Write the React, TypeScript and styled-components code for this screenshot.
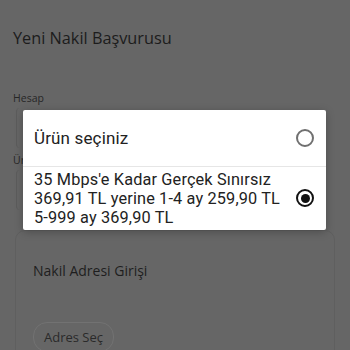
import React from "react";
import styled, { createGlobalStyle } from "styled-components";

const Global = createGlobalStyle`
  html, body { margin: 0; padding: 0; background: #666666; }
  * { box-sizing: border-box; }
`;

const Page = styled.div`
  position: relative;
  width: 350px;
  height: 350px;
  overflow: hidden;
  background: #666666;
  font-family: "Open Sans", sans-serif;
  color: #1e1e1e;
  padding: 0 15px 0 13px;
`;

const Title = styled.h1`
  margin: 0;
  padding-top: 27px;
  font-size: 16.3px;
  font-weight: 400;
  line-height: 22px;
  color: #1c1c1c;
`;

const Label = styled.div<{ $top: number }>`
  margin-top: ${(p) => p.$top}px;
  font-size: 10.5px;
  line-height: 14px;
  color: #262626;
`;

const Field = styled.div`
  margin-top: 3px;
  margin-left: 3px;
  height: 40px;
  border-left: 1px solid #5c5c5c;
  border-radius: 4px;
`;

const Card = styled.div`
  margin-top: 20px;
  margin-left: 2px;
  height: 160px;
  border: 1px solid #5f5f5f;
  border-radius: 10px;
  padding: 30px 17px;
  display: flex;
  flex-direction: column;
  align-items: flex-start;
`;

const CardTitle = styled.div`
  font-size: 14px;
  line-height: 20px;
  color: #1e1e1e;
`;

const OutlineButton = styled.div`
  margin-top: 41px;
  padding: 5px 10px;
  border: 1px solid #727272;
  border-radius: 14px;
  font-size: 13px;
  line-height: 18px;
  color: #2a2a2a;
`;

const Dialog = styled.div`
  position: absolute;
  left: 23px;
  top: 110px;
  width: 303px;
  height: 120px;
  background: #ffffff;
  border-radius: 2px;
  box-shadow: 0 2px 8px rgba(0, 0, 0, 0.25);
  font-family: Roboto, "Noto Sans", sans-serif;
  color: #222222;
  display: flex;
  flex-direction: column;
`;

const Row = styled.div<{ $height: number; $divider?: boolean }>`
  height: ${(p) => p.$height}px;
  display: flex;
  align-items: center;
  padding: 0 12px 0 11px;
  border-bottom: ${(p) => (p.$divider ? "1px solid #e6e6e6" : "none")};
`;

const RowText = styled.div<{ $size: number }>`
  flex: 1;
  font-size: ${(p) => p.$size}px;
  line-height: 19px;
  letter-spacing: 0.15px;
`;

const Radio = styled.div<{ $checked?: boolean }>`
  width: 18px;
  height: 18px;
  border-radius: 50%;
  border: 2px solid ${(p) => (p.$checked ? "#111111" : "#707070")};
  display: flex;
  align-items: center;
  justify-content: center;
  flex-shrink: 0;
  &::after {
    content: "";
    display: ${(p) => (p.$checked ? "block" : "none")};
    width: 9px;
    height: 9px;
    border-radius: 50%;
    background: #111111;
  }
`;

export default function App() {
  return (
    <>
      <Global />
      <Page>
        <Title>Yeni Nakil Başvurusu</Title>
        <Label $top={42}>Hesap</Label>
        <Field />
        <Label $top={5}>Ürün</Label>
        <Field />
        <Card>
          <CardTitle>Nakil Adresi Girişi</CardTitle>
          <OutlineButton>Adres Seç</OutlineButton>
        </Card>
        <Dialog>
          <Row $height={57} $divider>
            <RowText $size={17}>Ürün seçiniz</RowText>
            <Radio />
          </Row>
          <Row $height={62}>
            <RowText $size={16.3}>
              35 Mbps'e Kadar Gerçek Sınırsız
              <br />
              369,91 TL yerine 1-4 ay 259,90 TL
              <br />
              5-999 ay 369,90 TL
            </RowText>
            <Radio $checked />
          </Row>
        </Dialog>
      </Page>
    </>
  );
}
